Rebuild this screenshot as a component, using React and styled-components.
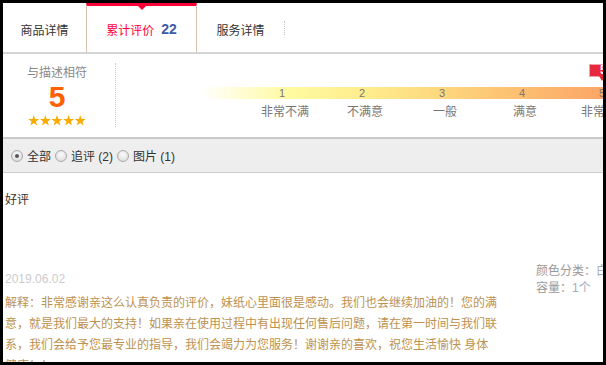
import React from 'react';
import styled, { createGlobalStyle } from 'styled-components';

const Global = createGlobalStyle`
  html, body { margin: 0; padding: 0; background: #000; }
  body {
    font-family: "Liberation Sans", "Noto Sans CJK SC", sans-serif;
    font-size: 12px;
    color: #333;
  }
`;

const Frame = styled.div`
  margin: 3px 0 0 3px;
  width: 600px;
  height: 359px;
  overflow: hidden;
  background: #fff;
`;

const Page = styled.div`
  width: 660px;
`;

const TabBar = styled.div`
  display: flex;
  align-items: stretch;
  height: 49px;
  border-bottom: 2px solid #d5d5d5;
`;

const Tab = styled.div`
  position: relative;
  box-sizing: border-box;
  width: ${(p) => p.$w}px;
  display: flex;
  align-items: center;
  justify-content: center;
  white-space: nowrap;
  color: ${(p) => (p.$active ? '#ff0036' : '#333')};
  border-top: 3px solid ${(p) => (p.$active ? '#ff0036' : 'transparent')};
  border-left: ${(p) => (p.$active ? '1px solid #d6c2ae' : '0')};
  border-right: ${(p) => (p.$active ? '1px solid #d6c2ae' : '0')};
  &::after {
    content: '';
    display: ${(p) => (p.$active ? 'block' : 'none')};
    position: absolute;
    top: 0;
    left: 50%;
    margin-left: -4px;
    border-left: 4px solid transparent;
    border-right: 4px solid transparent;
    border-top: 4px solid #ff0036;
  }
`;

const Count = styled.span`
  margin-left: 7px;
  color: #3d5ba9;
  font-weight: bold;
  font-size: 14px;
`;

const TabDivider = styled.span`
  align-self: center;
  height: 14px;
  border-left: 1px dotted #c8c8c8;
`;

const RatingSection = styled.div`
  display: flex;
  align-items: flex-start;
  height: 83px;
`;

const ScoreBox = styled.div`
  width: 108px;
  padding-right: 4px;
  height: 64px;
  margin-top: 9px;
  border-right: 1px dotted #ccc;
  display: flex;
  flex-direction: column;
  align-items: center;
`;

const ScoreLabel = styled.div`
  margin-top: 1px;
  line-height: 18px;
  color: #888;
`;

const ScoreValue = styled.div`
  font-family: "Liberation Sans", Arial, sans-serif;
  font-size: 30px;
  line-height: 30px;
  font-weight: bold;
  color: #ff6000;
`;

const Stars = styled.svg`
  display: block;
  margin-top: 3px;
`;

const ScaleWrap = styled.div`
  position: relative;
  margin-left: 84px;
  padding-top: 33px;
`;

const Bar = styled.div`
  display: flex;
  width: 440px;
  height: 12px;
  padding-left: 45px;
  box-sizing: border-box;
  background: linear-gradient(
    to right,
    #ffffff 0%,
    #fffaa0 20.5%,
    #ffec8c 38.6%,
    #fdd47c 56.8%,
    #fcbc70 75%,
    #fca465 93%,
    #fc9c62 100%
  );
`;

const BarCell = styled.div`
  width: 80px;
  flex: none;
  box-sizing: border-box;
  padding-right: 6px;
  text-align: center;
  font-size: 11px;
  line-height: 12px;
  color: #777;
`;

const LabelRow = styled.div`
  display: flex;
  padding-left: 45px;
  margin-top: 4px;
`;

const LabelCell = styled.div`
  width: 80px;
  flex: none;
  text-align: center;
  line-height: 18px;
  color: #777;
  white-space: nowrap;
`;

const Marker = styled.div`
  position: absolute;
  top: 10px;
  left: 389px;
  width: 28px;
  height: 13px;
  box-sizing: border-box;
  padding-left: 10px;
  background: #e5283b;
  border: 1px solid #f3a3ab;
  color: #fff;
  font-weight: bold;
  font-size: 12px;
  line-height: 11px;
  &::after {
    content: '';
    position: absolute;
    left: 9px;
    top: 11px;
    border-left: 3px solid transparent;
    border-right: 3px solid transparent;
    border-top: 5px solid #e5283b;
  }
`;

const FilterBar = styled.div`
  display: flex;
  align-items: center;
  height: 33px;
  padding-left: 8px;
  background: #eee;
  border-top: 2px solid #c9c9c9;
  border-bottom: 1px solid #ccc;
`;

const FilterOption = styled.label`
  display: inline-flex;
  align-items: center;
  gap: 4px;
  margin-right: 4px;
  color: #333;
  white-space: nowrap;
`;

const RadioDot = styled.span`
  position: relative;
  width: 12px;
  height: 12px;
  box-sizing: border-box;
  border-radius: 50%;
  border: 1px solid #a9a9a9;
  background: radial-gradient(circle at 50% 35%, #fbfbfb 0%, #e2e2e2 70%, #d4d4d4 100%);
  &::after {
    content: '';
    display: ${(p) => (p.$checked ? 'block' : 'none')};
    position: absolute;
    left: 3px;
    top: 3px;
    width: 4px;
    height: 4px;
    border-radius: 50%;
    background: #555;
  }
`;

const Review = styled.div`
  display: flex;
  padding-left: 2px;
`;

const Master = styled.div`
  width: 494px;
  flex: none;
`;

const ReviewText = styled.div`
  margin-top: 18px;
  line-height: 18px;
  color: #333;
`;

const ReviewDate = styled.div`
  margin-top: 61px;
  line-height: 18px;
  color: #ccc;
  font-family: "Liberation Sans", Tahoma, sans-serif;
`;

const Reply = styled.div`
  margin-top: 5px;
  line-height: 21px;
  color: #bd9150;
`;

const Meta = styled.div`
  margin-left: 37px;
  padding-top: 90px;
  line-height: 17px;
  white-space: nowrap;
`;

const MetaLine = styled.div`
  color: #999;
`;

const MetaValue = styled.span`
  color: #a2acc0;
`;

const starPoints = '6,0 7.41,4.06 11.71,4.15 8.28,6.74 9.53,10.85 6,8.4 2.47,10.85 3.72,6.74 0.29,4.15 4.59,4.06';

function StarRow() {
  return (
    <Stars width="58" height="11" viewBox="0 0 58 11">
      {[0, 1, 2, 3, 4].map((i) => (
        <polygon
          key={i}
          points={starPoints}
          fill="#f9ab00"
          transform={`translate(${i * 11.6} 0) scale(0.966)`}
        />
      ))}
    </Stars>
  );
}

const scale = [
  { n: '1', label: '非常不满' },
  { n: '2', label: '不满意' },
  { n: '3', label: '一般' },
  { n: '4', label: '满意' },
  { n: '5', label: '非常满意' },
];

export default function App() {
  return (
    <>
      <Global />
      <Frame>
        <Page>
          <TabBar>
            <Tab $w={83}>商品详情</Tab>
            <Tab $w={111} $active>
              累计评价<Count>22</Count>
            </Tab>
            <Tab $w={87}>服务详情</Tab>
            <TabDivider />
          </TabBar>

          <RatingSection>
            <ScoreBox>
              <ScoreLabel>与描述相符</ScoreLabel>
              <ScoreValue>5</ScoreValue>
              <StarRow />
            </ScoreBox>
            <ScaleWrap>
              <Marker>5</Marker>
              <Bar>
                {scale.map((s) => (
                  <BarCell key={s.n}>{s.n}</BarCell>
                ))}
              </Bar>
              <LabelRow>
                {scale.map((s) => (
                  <LabelCell key={s.n}>{s.label}</LabelCell>
                ))}
              </LabelRow>
            </ScaleWrap>
          </RatingSection>

          <FilterBar>
            <FilterOption>
              <RadioDot $checked />全部
            </FilterOption>
            <FilterOption>
              <RadioDot />追评 (2)
            </FilterOption>
            <FilterOption>
              <RadioDot />图片 (1)
            </FilterOption>
          </FilterBar>

          <Review>
            <Master>
              <ReviewText>好评</ReviewText>
              <ReviewDate>2019.06.02</ReviewDate>
              <Reply>
                解释：非常感谢亲这么认真负责的评价，妹纸心里面很是感动。我们也会继续加油的！您的满意，就是我们最大的支持！如果亲在使用过程中有出现任何售后问题，请在第一时间与我们联系，我们会给予您最专业的指导，我们会竭力为您服务！谢谢亲的喜欢，祝您生活愉快 身体健康！！
              </Reply>
            </Master>
            <Meta>
              <MetaLine>
                颜色分类：<MetaValue>白色</MetaValue>
              </MetaLine>
              <MetaLine>
                容量：<MetaValue>1个</MetaValue>
              </MetaLine>
            </Meta>
          </Review>
        </Page>
      </Frame>
    </>
  );
}
